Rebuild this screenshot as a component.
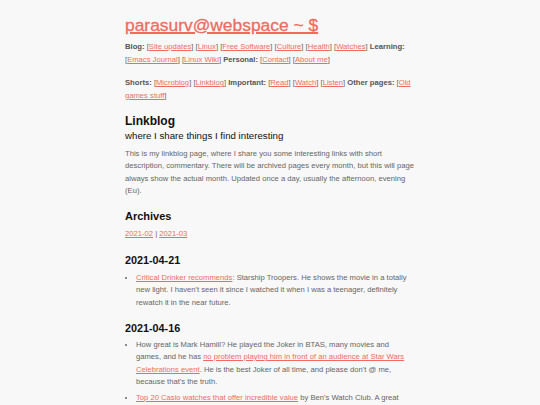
import React from "react";

const A = ({ children }: { children: React.ReactNode }) => (
  <a href="#" className="text-[#f06b5d] underline">{children}</a>
);

const B = ({ l }: { l: string }) => (
  <>
    [<A>{l}</A>]
  </>
);

export default function App() {
  return (
    <div className="min-h-[405px] bg-[#f8f8f8] font-['Liberation_Sans',Arial,sans-serif]">
      <div className="w-[290px] mx-auto pt-[14px] text-[7.65px] leading-[12.5px] text-[#666]">
        <h1 className="text-[17.4px] leading-[22px] font-normal">
          <a href="#" className="text-[#f06b5d] underline decoration-[1.5px] [-webkit-text-stroke:0.3px_#f06b5d]">
            parasurv@webspace ~ $
          </a>
        </h1>
        <p className="mt-[5px]">
          <b className="text-[#555]">Blog:</b> <B l="Site updates" /> <B l="Linux" /> <B l="Free Software" />{" "}
          <B l="Culture" /> <B l="Health" /> <B l="Watches" /> <b className="text-[#555]">Learning:</b>{" "}
          <B l="Emacs Journal" /> <B l="Linux Wiki" /> <b className="text-[#555]">Personal:</b> <B l="Contact" />{" "}
          <B l="About me" />
        </p>
        <p className="mt-[11px]">
          <b className="text-[#555]">Shorts:</b> <B l="Microblog" /> <B l="Linkblog" />{" "}
          <b className="text-[#555]">Important:</b> <B l="Read" /> <B l="Watch" /> <B l="Listen" />{" "}
          <b className="text-[#555]">Other pages:</b> <B l="Old games stuff" />
        </p>
        <h2 className="mt-[12px] text-[12px] leading-[15px] font-bold text-[#111]">Linkblog</h2>
        <h3 className="mt-[0.5px] text-[9.7px] leading-[12px] text-[#111]">where I share things I find interesting</h3>
        <p className="mt-[6px]">
          This is my linkblog page, where I share you some interesting links with short description, commentary.
          There will be archived pages every month, but this will page always show the actual month. Updated once a
          day, usually the afternoon, evening (Eu).
        </p>
        <h2 className="mt-[11px] text-[11px] leading-[14px] font-bold text-[#111]">Archives</h2>
        <p className="mt-[5px]">
          <A>2021-02</A> | <A>2021-03</A>
        </p>
        <h2 className="mt-[12.5px] text-[10.8px] leading-[14px] font-bold text-[#111]">2021-04-21</h2>
        <ul className="mt-[5px] list-disc pl-[11px]">
          <li>
            <A>Critical Drinker recommends</A>: Starship Troopers. He shows the movie in a totally new light. I haven't
            seen it since I watched it when I was a teenager, definitely rewatch it in the near future.
          </li>
        </ul>
        <h2 className="mt-[11.5px] text-[10.8px] leading-[14px] font-bold text-[#111]">2021-04-16</h2>
        <ul className="mt-[4px] list-disc pl-[11px]">
          <li>
            How great is Mark Hamill? He played the Joker in BTAS, many movies and games, and he has{" "}
            <A>no problem playing him in front of an audience at Star Wars Celebrations event</A>. He is the best Joker
            of all time, and please don't @ me, because that's the truth.
          </li>
          <li className="mt-[3px]">
            <A>Top 20 Casio watches that offer incredible value</A> by Ben's Watch Club. A great video about Casio
            watches.
          </li>
        </ul>
      </div>
    </div>
  );
}
